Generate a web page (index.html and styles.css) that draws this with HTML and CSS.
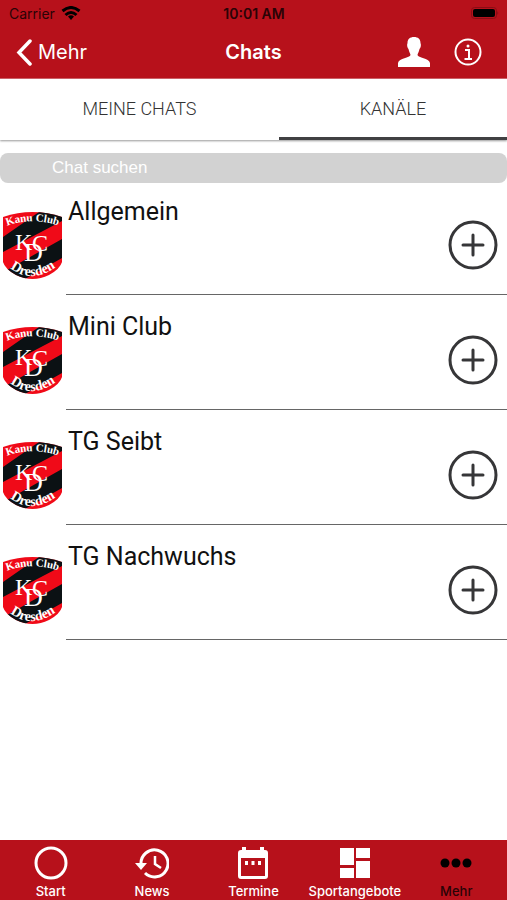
FILE: index.html
```html
<!DOCTYPE html>
<html lang="de">
<head>
<meta charset="utf-8">
<meta name="viewport" content="width=device-width, initial-scale=1">
<title>Chats</title>
<link rel="stylesheet" href="styles.css">
</head>
<body>
<svg class="defs" aria-hidden="true">
  <defs>
    <clipPath id="shield-clip"><path d="M0 5Q29.500 -5 59 5V50Q57 57 46 63Q29.500 71 13 63Q2 57 0 50Z"/></clipPath>
    <path id="arc-top" d="M4 14Q29.500 4 60 15"/>
    <path id="arc-bottom" d="M7 56Q30 74 57 52"/>
    <symbol id="crest" viewBox="0 0 59 67">
      <g clip-path="url(#shield-clip)">
        <path fill="#f00a18" d="M0 0h59v67H0z"/>
        <path fill="#0b1114" d="M0 25L36 0H59V9L0 40zM4 58L59 27V46L22 67H12z"/>
      </g>
      <g fill="#fff" font-family="Liberation Serif, serif">
        <text font-size="11" font-weight="700"><textPath href="#arc-top">Kanu Club</textPath></text>
        <text x="12" y="38" font-size="24">K</text>
        <text x="21" y="49" font-size="26">D</text>
        <text x="29" y="39" font-size="24">C</text>
        <text font-size="14" font-weight="700"><textPath href="#arc-bottom">Dresden</textPath></text>
      </g>
    </symbol>
    <symbol id="plus" viewBox="0 0 50 50">
      <g fill="none" stroke="#363638" stroke-width="3"><circle cx="25" cy="25" r="23"/><path stroke-linecap="round" d="M15 25h20M25 15v20"/></g>
    </symbol>
  </defs>
</svg>
<div class="app">
  <header class="header">
    <div class="status">
      <div class="carrier">Carrier
        <svg width="20" height="14" viewBox="0 0 20 14" aria-hidden="true"><g fill="none" stroke="#000" stroke-width="3"><path d="M1.500 5Q10 -2 18.500 5M4.500 9Q10 4 15.500 9"/></g><path d="M7 10.500Q10 8 13 10.500L10 14z"/></svg>
      </div>
      <div class="time">10:01 AM</div>
      <svg class="battery" width="28" height="12" viewBox="0 0 28 12" aria-hidden="true"><rect x=".5" y=".5" width="25" height="11" rx="3" fill="none" stroke="#8a0d15"/><rect x="2" y="2" width="22" height="8" rx="2"/><path d="M26.500 4v4q1.500-2 0-4z" fill="#760b12"/></svg>
    </div>
    <nav class="nav">
      <a class="back" href="#mehr"><svg width="16" height="27" viewBox="0 0 16 27" aria-hidden="true"><path d="M14 2L3 13.500L14 25" fill="none" stroke="#fff" stroke-width="3.500" stroke-linecap="round"/></svg>Mehr</a>
      <h1 class="title">Chats</h1>
      <div class="actions">
        <button type="button" aria-label="Profil"><svg width="32" height="30" viewBox="0 0 32 30"><path fill="#fff" d="M16 0C20 0 22.500 2 22.500 6C23.500 8 22.500 11 21.500 12C21 15 19.500 17 19.500 18C20 21 31 21 32 26V30H0V26C1 21 12 21 12.500 18C12.500 17 11 15 10.500 12C9.500 11 8.500 8 9.500 6C9.500 2 12 0 16 0Z"/></svg></button>
        <button type="button" aria-label="Info"><svg width="28" height="28" viewBox="0 0 28 28"><g fill="none" stroke="#fff" stroke-width="2"><circle cx="14" cy="14" r="12.500"/><path d="M11 12h4v9M10.500 21h7.500"/></g><circle cx="14" cy="8" r="1.500" fill="#fff"/></svg></button>
      </div>
    </nav>
  </header>
  <div class="tabs" role="tablist">
    <button class="tab" type="button" role="tab" aria-selected="false">MEINE CHATS</button>
    <button class="tab active" type="button" role="tab" aria-selected="true">KANÄLE</button>
  </div>
  <input class="search" type="search" placeholder="Chat suchen" aria-label="Chat suchen">
  <ul class="list">
    <li class="row"><svg class="crest" aria-hidden="true"><use href="#crest"/></svg><div class="cell"><h2 class="name">Allgemein</h2><button class="add" type="button" aria-label="Allgemein beitreten"><svg><use href="#plus"/></svg></button></div></li>
    <li class="row"><svg class="crest" aria-hidden="true"><use href="#crest"/></svg><div class="cell"><h2 class="name">Mini Club</h2><button class="add" type="button" aria-label="Mini Club beitreten"><svg><use href="#plus"/></svg></button></div></li>
    <li class="row"><svg class="crest" aria-hidden="true"><use href="#crest"/></svg><div class="cell"><h2 class="name">TG Seibt</h2><button class="add" type="button" aria-label="TG Seibt beitreten"><svg><use href="#plus"/></svg></button></div></li>
    <li class="row"><svg class="crest" aria-hidden="true"><use href="#crest"/></svg><div class="cell"><h2 class="name">TG Nachwuchs</h2><button class="add" type="button" aria-label="TG Nachwuchs beitreten"><svg><use href="#plus"/></svg></button></div></li>
  </ul>
  <nav class="bottom">
    <a href="#start"><svg viewBox="0 0 34 34"><circle cx="17" cy="17" r="15" fill="none" stroke="#fff" stroke-width="3"/></svg>Start</a>
    <a href="#news"><svg viewBox="0 0 34 34"><g fill="none" stroke="#fff" stroke-width="3"><path d="M6 18A13.500 13.500 0 1 1 10 27"/><path stroke-width="2.500" d="M20 10v8l6 4"/></g><path fill="#fff" d="M0 17h12l-6 7z"/></svg>News</a>
    <a href="#termine"><svg viewBox="0 0 34 34"><path fill="#fff" fill-rule="evenodd" d="M6 1h4v3h14V1h4v3h1q3 0 3 3v23q0 3-3 3H5q-3 0-3-3V7q0-3 3-3h1zM5 12v18h24V12zM9 15h3v4H9zM15.500 15h3v4h-3zM22 15h3v4h-3z"/></svg>Termine</a>
    <a href="#sport"><svg viewBox="0 0 34 34"><path fill="#fff" d="M2 2h14v17H2zM18 2h14v10H18zM2 22h14v10H2zM18 15h14v17H18z"/></svg>Sportangebote</a>
    <a class="current" href="#mehr"><svg viewBox="0 0 34 34"><circle cx="6" cy="17" r="4.500"/><circle cx="17" cy="17" r="4.500"/><circle cx="28" cy="17" r="4.500"/></svg>Mehr</a>
  </nav>
</div>
</body>
</html>
```
FILE: styles.css
```css
* { box-sizing: border-box; }
body { margin: 0; background: #fff; font-family: Inter, "Liberation Sans", sans-serif; color: #111; }
button { border: 0; padding: 0; background: none; font: inherit; color: inherit; }
a { color: inherit; text-decoration: none; }
svg { display: block; }
.defs { position: absolute; width: 0; height: 0; }
.app { min-height: 100vh; display: flex; flex-direction: column; }

.header { background: #b7111b; border-bottom: 1px solid #cf5c63; }
.status { display: grid; grid-template-columns: 1fr auto 1fr; align-items: center; height: 26px; padding: 0 8px 0 9px; font-size: 14px; color: #2a0306; }
.carrier { display: flex; align-items: center; gap: 6px; }
.time { font-weight: 600; }
.battery { justify-self: end; }
.nav { display: grid; grid-template-columns: 1fr auto 1fr; align-items: center; height: 52px; padding: 0 25px 0 16px; color: #fff; }
.back { display: flex; align-items: center; gap: 6px; font-size: 20px; }
.title { margin: 0; padding-left: 9px; font-size: 20px; font-weight: 600; }
.actions { display: flex; align-items: center; justify-content: flex-end; gap: 24px; }

.tabs { display: grid; grid-template-columns: 11fr 9fr; height: 61px; box-shadow: 0 1px 2px #999; }
.tab { border-bottom: 3px solid transparent; font-family: Roboto, sans-serif; font-size: 18px; font-weight: 300; color: #333; }
.tab.active { border-bottom-color: #404042; }

.search { appearance: none; width: 100%; height: 30px; margin: 13px 0 0; padding: 0 52px; border: 0; border-radius: 8px; background: #d2d2d2; font-family: "Liberation Sans", sans-serif; font-size: 17px; color: #fff; }
.search::placeholder { color: #fff; opacity: 1; }

.list { display: grid; gap: 3px; margin: 0; padding: 0; list-style: none; }
.row { display: flex; height: 112px; }
.crest { flex: none; width: 59px; height: 67px; margin: 29px 4px 0 3px; }
.cell { flex: 1; display: flex; justify-content: space-between; padding: 15px 9px 0 2px; border-bottom: 1px solid #666; }
.name { margin: 0; font-family: Roboto, sans-serif; font-size: 25px; line-height: 28px; font-weight: 400; }
.add { align-self: flex-start; margin-top: 22px; }
.add svg { width: 50px; height: 50px; }

.bottom { display: grid; grid-template-columns: repeat(5, 1fr); height: 60px; margin-top: auto; padding-top: 6px; background: #b7111b; color: #fff; }
.bottom a { display: flex; flex-direction: column; align-items: center; gap: 3px; font-size: 13px; line-height: 16px; font-weight: 500; }
.bottom svg { width: 34px; height: 34px; }
.bottom .current { color: #2a0306; }
```
